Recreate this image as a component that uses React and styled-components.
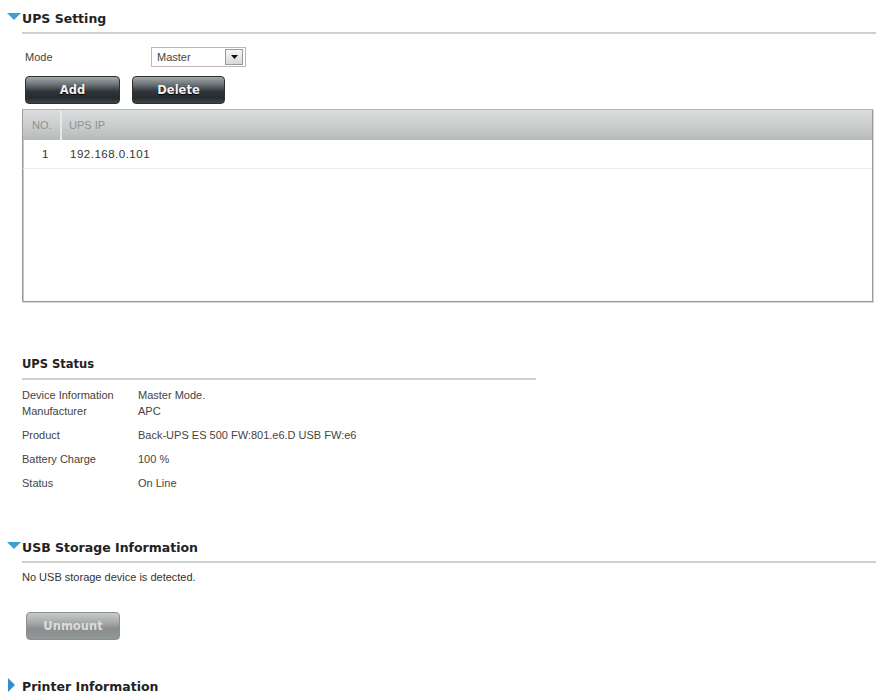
import React from "react";
import styled, { createGlobalStyle } from "styled-components";

const Global = createGlobalStyle`
  html, body { margin: 0; padding: 0; background: #fff; }
  body {
    font-family: "Liberation Sans", Arial, sans-serif;
    font-size: 11px;
    color: #3a3a3a;
  }
`;

const Page = styled.div`
  width: 876px;
  padding: 11px 0 0 7px;
  box-sizing: border-box;
`;

const SectionHead = styled.div`
  display: flex;
  align-items: flex-start;
  margin-top: ${(p) => p.$top || 0}px;
`;

const Arrow = styled.svg`
  flex: none;
  width: 15px;
  margin-top: ${(p) => p.$dy || 0}px;
`;

const HeadTitle = styled.div`
  flex: 1;
  font-family: "DejaVu Sans", Verdana, sans-serif;
  font-weight: bold;
  font-size: 12.5px;
  color: #222;
  line-height: 15px;
  padding-bottom: 6px;
  border-bottom: ${(p) => (p.$line ? "2px solid #cfcfcf" : "none")};
`;

const Body = styled.div`
  padding-left: 15px;
`;

const ModeRow = styled.div`
  display: flex;
  align-items: center;
  margin: 12px 0 0 3px;
  height: 21px;
`;

const Label = styled.span`
  width: 126px;
  color: #444;
`;

const Select = styled.div`
  display: flex;
  align-items: center;
  justify-content: space-between;
  width: 95px;
  height: 20px;
  box-sizing: border-box;
  border: 1px solid #b9b9b9;
  padding: 0 2px 0 5px;
  background: #fff;
  color: #444;
`;

const SelectBtn = styled.span`
  display: flex;
  align-items: center;
  justify-content: center;
  width: 16px;
  height: 14px;
  border: 1px solid #9a9a9a;
  background: linear-gradient(#f8f8f8, #d8d8d8);
`;

const ButtonRow = styled.div`
  display: flex;
  gap: 12px;
  margin: 9px 0 0 3px;
`;

const DarkButton = styled.button`
  width: ${(p) => p.$w}px;
  height: 28px;
  border: 1px solid #2b3033;
  border-radius: 4px;
  background: linear-gradient(
    #a3a9ac 0%,
    #6a7175 30%,
    #2f3538 55%,
    #262b2e 80%,
    #3f4548 100%
  );
  color: #f2f2f2;
  font-family: "DejaVu Sans", Verdana, sans-serif;
  font-weight: bold;
  font-size: 11.5px;
  text-shadow: 0 1px 1px #000;
  padding: 0;
`;

const GrayButton = styled.button`
  width: 94px;
  height: 28px;
  border: 1px solid #8c8f8f;
  border-radius: 4px;
  background: linear-gradient(#c9cbcb 0%, #a3a6a6 40%, #8a8d8d 60%, #959898 100%);
  color: #dcdcdc;
  font-family: "DejaVu Sans", Verdana, sans-serif;
  font-weight: bold;
  font-size: 11.5px;
  padding: 0;
`;

const Table = styled.div`
  margin-top: 5px;
  width: 851px;
  height: 193px;
  box-sizing: border-box;
  border: 1px solid #9a9a9a;
  border-top-color: #b0b0b0;
  box-shadow: inset 1px 0 0 #c8c8c8, 1px 1px 0 #d8d8d8;
  background: #fff;
`;

const HeadRow = styled.div`
  display: grid;
  grid-template-columns: 39px 1fr;
  height: 30px;
  align-items: center;
  background: linear-gradient(#dcdede 0%, #cbcece 50%, #b7baba 100%);
  color: #8e9292;
  font-size: 11px;
`;

const HeadCell = styled.div`
  height: 100%;
  display: flex;
  align-items: center;
  padding-left: ${(p) => p.$pl}px;
  border-right: ${(p) => (p.$sep ? "2px solid #e6e8e8" : "none")};
`;

const DataRow = styled.div`
  display: grid;
  grid-template-columns: 39px 1fr;
  height: 28px;
  align-items: center;
  border-bottom: 1px solid #ececec;
  color: #333;
  font-size: 11.5px;
  letter-spacing: 0.5px;
`;

const Cell = styled.div`
  padding-left: ${(p) => p.$pl}px;
`;

const SubTitle = styled.div`
  margin-top: 55px;
  width: 514px;
  font-family: "DejaVu Sans", Verdana, sans-serif;
  font-weight: bold;
  font-size: 11.5px;
  color: #222;
  padding-bottom: 7px;
  border-bottom: 2px solid #cfcfcf;
`;

const InfoGrid = styled.div`
  display: grid;
  grid-template-columns: 116px auto;
  margin-top: 8px;
  color: #444;
`;

const InfoLabel = styled.div`
  height: ${(p) => p.$h}px;
  line-height: 15px;
`;

const Note = styled.div`
  margin-top: 8px;
  color: #333;
`;

const UnmountWrap = styled.div`
  margin: 29px 0 0 4px;
`;

const rows = [
  ["Device Information", "Master Mode.", 16],
  ["Manufacturer", "APC", 24],
  ["Product", "Back-UPS ES 500 FW:801.e6.D USB FW:e6", 24],
  ["Battery Charge", "100 %", 24],
  ["Status", "On Line", 24],
];

function DownArrow() {
  return (
    <Arrow $dy={2} viewBox="0 0 15 8" height="8">
      <polygon points="0,0 14,0 7,7" fill="#3d9fd8" />
    </Arrow>
  );
}

function RightArrow() {
  return (
    <Arrow $dy={-1} viewBox="0 0 15 15" height="15">
      <polygon points="1,0 8,7 1,14" fill="#2f8fd0" />
    </Arrow>
  );
}

export default function App() {
  return (
    <Page>
      <Global />
      <SectionHead>
        <DownArrow />
        <HeadTitle $line>UPS Setting</HeadTitle>
      </SectionHead>
      <Body>
        <ModeRow>
          <Label>Mode</Label>
          <Select>
            <span>Master</span>
            <SelectBtn>
              <svg width="7" height="4" viewBox="0 0 7 4">
                <polygon points="0,0 7,0 3.5,4" fill="#111" />
              </svg>
            </SelectBtn>
          </Select>
        </ModeRow>
        <ButtonRow>
          <DarkButton $w={95}>Add</DarkButton>
          <DarkButton $w={93}>Delete</DarkButton>
        </ButtonRow>
        <Table>
          <HeadRow>
            <HeadCell $pl={9} $sep>NO.</HeadCell>
            <HeadCell $pl={7}>UPS IP</HeadCell>
          </HeadRow>
          <DataRow>
            <Cell $pl={19}>1</Cell>
            <Cell $pl={8}>192.168.0.101</Cell>
          </DataRow>
        </Table>
        <SubTitle>UPS Status</SubTitle>
        <InfoGrid>
          {rows.map(([k, v, h]) => (
            <React.Fragment key={k}>
              <InfoLabel $h={h}>{k}</InfoLabel>
              <InfoLabel $h={h}>{v}</InfoLabel>
            </React.Fragment>
          ))}
        </InfoGrid>
      </Body>
      <SectionHead $top={40}>
        <DownArrow />
        <HeadTitle $line>USB Storage Information</HeadTitle>
      </SectionHead>
      <Body>
        <Note>No USB storage device is detected.</Note>
        <UnmountWrap>
          <GrayButton>Unmount</GrayButton>
        </UnmountWrap>
      </Body>
      <SectionHead $top={39}>
        <RightArrow />
        <HeadTitle>Printer Information</HeadTitle>
      </SectionHead>
    </Page>
  );
}
